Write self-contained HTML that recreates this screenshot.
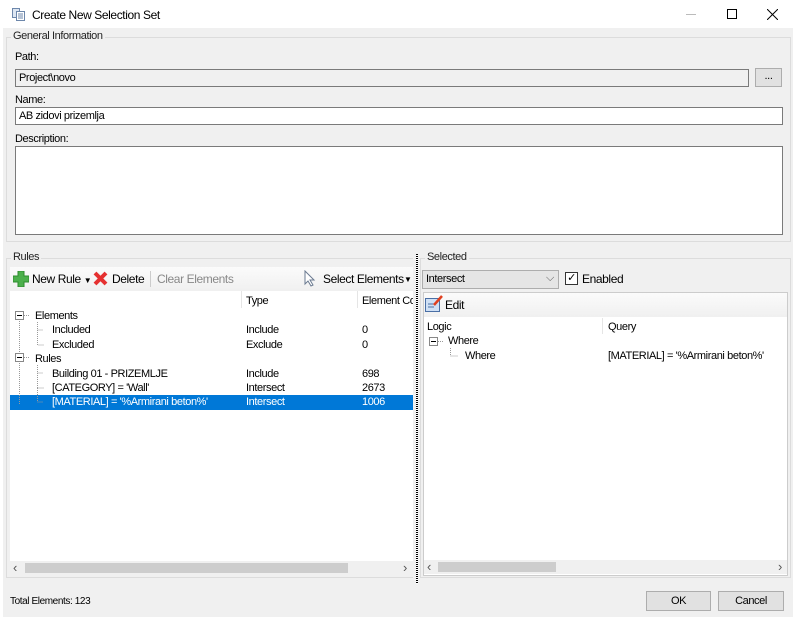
<!DOCTYPE html>
<html><head><style>
*{box-sizing:border-box;margin:0;padding:0}
body{width:800px;height:623px;background:#fff;font-family:"Liberation Sans",sans-serif;font-size:11px;color:#000;position:relative;overflow:hidden;letter-spacing:-0.4px}
.a{position:absolute;white-space:nowrap}
.grp{position:absolute;border:1px solid #dcdcdc}
.lg{position:absolute;background:#f0f0f0;padding:0 2px;top:-8px;left:4px;color:#222}
.tb{position:absolute;border:1px solid #7a7a7a;background:#fff;padding:2px 3px}
.btn{position:absolute;border:1px solid #adadad;background:#e1e1e1;text-align:center}
.sb{position:absolute;height:14px;background:#f0f0f0}
</style></head><body>
<div class="a" style="left:0;top:0;width:800px;height:28px;background:#fff"></div>
<svg class="a" style="left:12px;top:8px" width="14" height="13"><rect x="0.5" y="0.5" width="7" height="9" fill="#dde6f2" stroke="#6d87ab"/><rect x="4.5" y="3.5" width="8" height="9" fill="#fff" stroke="#6d87ab"/><path d="M6 6h5M6 8h5M6 10h5" stroke="#6d87ab"/></svg>
<div class="a" style="left:32px;top:8px;font-size:12px">Create New Selection Set</div>
<div class="a" style="left:686px;top:14px;width:10px;height:1px;background:#bbb"></div>
<div class="a" style="left:727px;top:9px;width:10px;height:10px;border:1px solid #000"></div>
<svg class="a" style="left:767px;top:9px" width="11" height="11"><path d="M0 0L11 11M11 0L0 11" stroke="#000"/></svg>
<div class="a" style="left:3px;top:28px;width:790px;height:589px;background:#f0f0f0"></div>

<div class="grp" style="left:6px;top:37px;width:785px;height:205px"><div class="lg">General Information</div></div>
<div class="a" style="left:15px;top:51px">Path:</div>
<div class="tb" style="left:15px;top:69px;width:734px;height:18px;background:#f0f0f0">Project\novo</div>
<div class="btn" style="left:755px;top:68px;width:27px;height:19px;line-height:15px">...</div>
<div class="a" style="left:15px;top:94px">Name:</div>
<div class="tb" style="left:15px;top:107px;width:768px;height:18px">AB zidovi prizemlja</div>
<div class="a" style="left:15px;top:133px">Description:</div>
<div class="tb" style="left:15px;top:146px;width:768px;height:89px"></div>

<div class="grp" style="left:6px;top:258px;width:407px;height:320px;border-right:none"><div class="lg">Rules</div></div>
<div class="grp" style="left:420px;top:258px;width:371px;height:320px"><div class="lg">Selected</div></div>
<div class="a" style="left:416px;top:254px;width:2px;height:330px;background:repeating-linear-gradient(#000 0 1px,#fff 1px 2px)"></div>

<div class="a" style="left:10px;top:267px;width:403px;height:24px;background:linear-gradient(#fbfbfb,#f0f0f0)"></div>
<svg class="a" style="left:13px;top:271px" width="16" height="16"><path d="M5 0h6v5h5v6h-5v5H5v-5H0V5h5z" fill="#4cb04c" stroke="#2e8b2e"/></svg>
<div class="a" style="left:32px;top:272px;font-size:12px">New Rule <span style="font-size:8px">▼</span></div>
<svg class="a" style="left:93px;top:271px" width="15" height="15"><path d="M2 2L13 13M13 2L2 13" stroke="#e53030" stroke-width="4"/></svg>
<div class="a" style="left:112px;top:272px;font-size:12px">Delete</div>
<div class="a" style="left:150px;top:271px;width:1px;height:16px;background:#ccc"></div>
<div class="a" style="left:157px;top:272px;font-size:12px;color:#888">Clear Elements</div>
<svg class="a" style="left:304px;top:270px" width="12" height="17"><path d="M1 1v13l3-3 3 5 2-1-3-5h4z" fill="#fff" stroke="#6a7a90"/></svg>
<div class="a" style="left:323px;top:272px;font-size:12px">Select Elements</div>
<div class="a" style="left:404px;top:275px;font-size:8px">▼</div>

<div class="a" style="left:10px;top:291px;width:403px;height:284px;background:#fff"></div>
<div class="a" style="left:241px;top:291px;width:1px;height:17px;background:#e5e5e5"></div>
<div class="a" style="left:357px;top:291px;width:1px;height:17px;background:#e5e5e5"></div>
<div class="a" style="left:246px;top:295px">Type</div>
<div class="a" style="left:362px;top:295px;width:51px;overflow:hidden">Element Count</div>
<div class="a" style="left:10px;top:395px;width:403px;height:15px;background:#0078d7"></div>
<svg class="a" style="left:14px;top:310px" width="40" height="100"><g stroke="#999" stroke-dasharray="1 1" fill="none"><path d="M5.5 11V43M5.5 53V95M10 5.5h6M10 47.5h6M23.5 12v8h6M23.5 20v15h6M23.5 55v8h6M23.5 63v15h6M23.5 78v14h6"/></g><rect x="1.5" y="1.5" width="8" height="8" fill="#fff" stroke="#888"/><path d="M3 5.5h5" stroke="#000"/><rect x="1.5" y="43.5" width="8" height="8" fill="#fff" stroke="#888"/><path d="M3 47.5h5" stroke="#000"/></svg>
<div class="a" style="left:35px;top:310px">Elements</div>
<div class="a" style="left:52px;top:324px">Included</div><div class="a" style="left:246px;top:324px">Include</div><div class="a" style="left:362px;top:324px">0</div>
<div class="a" style="left:52px;top:339px">Excluded</div><div class="a" style="left:246px;top:339px">Exclude</div><div class="a" style="left:362px;top:339px">0</div>
<div class="a" style="left:35px;top:353px">Rules</div>
<div class="a" style="left:52px;top:368px">Building 01 - PRIZEMLJE</div><div class="a" style="left:246px;top:368px">Include</div><div class="a" style="left:362px;top:368px">698</div>
<div class="a" style="left:52px;top:382px">[CATEGORY] = 'Wall'</div><div class="a" style="left:246px;top:382px">Intersect</div><div class="a" style="left:362px;top:382px">2673</div>
<div class="a" style="left:52px;top:396px;color:#fff">[MATERIAL] = '%Armirani beton%'</div><div class="a" style="left:246px;top:396px;color:#fff">Intersect</div><div class="a" style="left:362px;top:396px;color:#fff">1006</div>
<div class="sb" style="left:10px;top:561px;width:403px"></div>
<div class="a" style="left:25px;top:563px;width:323px;height:10px;background:#cdcdcd"></div>
<div class="a" style="left:13px;top:560px;color:#555;font-size:13px">‹</div><div class="a" style="left:403px;top:560px;color:#555;font-size:13px">›</div>

<div class="a" style="left:422px;top:270px;width:137px;height:19px;border:1px solid #adadad;background:#e5e5e5;padding:2px 3px">Intersect<span style="position:absolute;right:4px;top:1px;color:#555">⌵</span></div>
<div class="a" style="left:565px;top:272px;width:13px;height:13px;border:1px solid #333;background:#fff;font-size:11px;line-height:11px;text-align:center">✓</div>
<div class="a" style="left:582px;top:272px;font-size:12px">Enabled</div>

<div class="a" style="left:423px;top:292px;width:365px;height:284px;background:#fff;border:1px solid #ccc"></div>
<div class="a" style="left:424px;top:293px;width:363px;height:24px;background:linear-gradient(#fbfbfb,#f0f0f0)"></div>
<svg class="a" style="left:425px;top:295px" width="18" height="18"><rect x="0.5" y="3.5" width="14" height="13" fill="#cfe0f5" stroke="#4a6fa5"/><path d="M3 9h8M3 12h6" stroke="#4a6fa5"/><path d="M9 10L17 1" stroke="#e04020" stroke-width="2.5"/></svg>
<div class="a" style="left:445px;top:298px;font-size:12px">Edit</div>
<div class="a" style="left:602px;top:318px;width:1px;height:16px;background:#e5e5e5"></div>
<div class="a" style="left:427px;top:321px">Logic</div>
<div class="a" style="left:608px;top:321px">Query</div>
<svg class="a" style="left:428px;top:336px" width="40" height="24"><rect x="1.5" y="1.5" width="8" height="8" fill="#fff" stroke="#888"/><path d="M3 5.5h5" stroke="#000"/><g stroke="#999" stroke-dasharray="1 1" fill="none"><path d="M10 5.5h6M22.5 12v8h8"/></g></svg>
<div class="a" style="left:448px;top:335px">Where</div>
<div class="a" style="left:465px;top:350px">Where</div>
<div class="a" style="left:608px;top:350px">[MATERIAL] = '%Armirani beton%'</div>
<div class="sb" style="left:424px;top:560px;width:363px"></div>
<div class="a" style="left:438px;top:562px;width:118px;height:10px;background:#cdcdcd"></div>
<div class="a" style="left:427px;top:559px;color:#555;font-size:13px">‹</div><div class="a" style="left:778px;top:559px;color:#555;font-size:13px">›</div>

<div class="a" style="left:10px;top:596px;font-size:10px">Total Elements: 123</div>
<div class="btn" style="left:646px;top:591px;width:65px;height:20px;line-height:18px">OK</div>
<div class="btn" style="left:718px;top:591px;width:66px;height:20px;line-height:18px">Cancel</div>
</body></html>
